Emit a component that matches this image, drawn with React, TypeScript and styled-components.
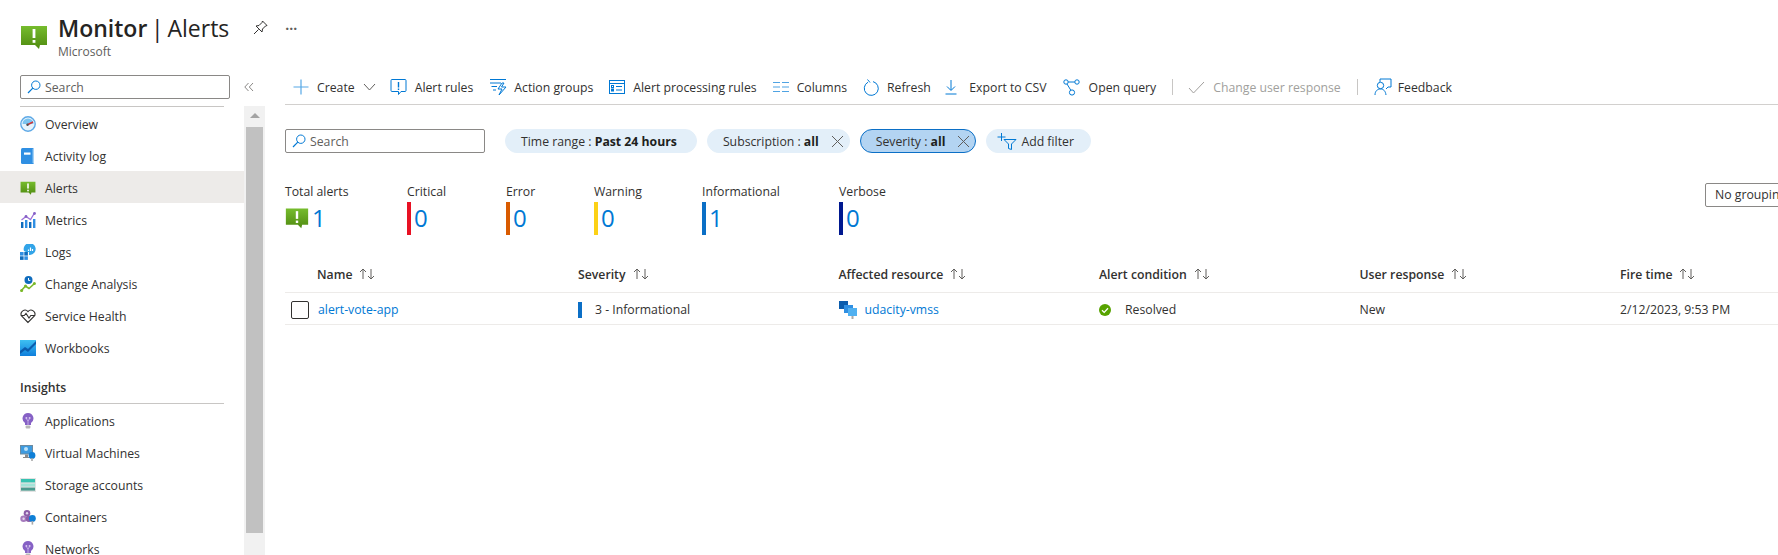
import type {ReactElement} from "react";
import styled, {createGlobalStyle} from "styled-components";

const GlobalStyle = createGlobalStyle`
  html, body {
    margin: 0;
    height: 555px;
    overflow: hidden;
    background: #fff;
  }
  body {
    font-family: "Open Sans", "Liberation Sans", sans-serif;
    font-size: 12.25px;
    color: #323130;
  }
`;

const AlertIcon = ({size}: {size: number}) => (
    <svg width={size} height={size} viewBox="0 0 28 28">
        <defs>
            <linearGradient id="alertGreen" x1="0" y1="0" x2="0" y2="1">
                <stop offset="0" stopColor="#76bc2d" />
                <stop offset="1" stopColor="#4f8a10" />
            </linearGradient>
        </defs>
        <path d="M1 3h26v19H20l-1 4-4-4H1z" fill="url(#alertGreen)" />
        <rect x="12.6" y="6" width="2.8" height="9" fill="#fff" />
        <rect x="12.6" y="17" width="2.8" height="2.8" fill="#fff" />
    </svg>
);

const SearchGlyph = () => (
    <svg width="14" height="14" viewBox="0 0 14 14" fill="none" stroke="#0078d4">
        <circle cx="8.8" cy="5.2" r="4.2" />
        <path d="M5.8 8.2 1 13" strokeWidth="1.2" />
    </svg>
);

const CloseGlyph = () => (
    <svg width="13" height="13" viewBox="0 0 13 13" fill="none" stroke="#605e5c">
        <path d="M1 1l11 11M12 1L1 12" />
    </svg>
);

const SortGlyph = () => (
    <svg width="18" height="12" viewBox="0 0 18 12" fill="none" stroke="#605e5c">
        <path d="M5 11V1M2 4l3-3 3 3M13 1v10M10 8l3 3 3-3" />
    </svg>
);

const navIcons: Record<string, ReactElement> = {
    overview: (
        <svg width="16" height="16" viewBox="0 0 16 16">
            <circle cx="8" cy="8" r="7.2" fill="#e6f3fc" stroke="#5ea9e6" strokeWidth="1.4" />
            <path d="M2.5 8a5.5 5.5 0 0 1 11 0z" fill="#7cc4f0" />
            <path d="M7 9l6-3" stroke="#d13438" strokeWidth="1.4" />
            <circle cx="7.5" cy="8.8" r="1.2" fill="#505050" />
        </svg>
    ),
    log: (
        <svg width="16" height="16" viewBox="0 0 16 16">
            <rect x="1" y="0" width="13" height="16" rx="1.5" fill="#2f8fe3" />
            <rect x="12.6" y="1" width="1.4" height="14" fill="#a6d2f5" />
            <rect x="4" y="4.5" width="6.5" height="2.2" fill="#fff" />
        </svg>
    ),
    metrics: (
        <svg width="16" height="16" viewBox="0 0 16 16">
            <rect x="1" y="10" width="2.4" height="6" fill="#0f6cbd" />
            <rect x="5" y="8" width="2.4" height="8" fill="#2f8fe3" />
            <rect x="9" y="10" width="2.4" height="6" fill="#0f6cbd" />
            <rect x="13" y="7" width="2.4" height="9" fill="#2f8fe3" />
            <path d="M1.5 8L6 4.5l4.5 3 4-6.5" fill="none" stroke="#9b6fd8" strokeWidth="1.3" />
            <circle cx="6" cy="4.5" r="1.4" fill="#8661c5" />
            <circle cx="14.5" cy="1.5" r="1.4" fill="#8661c5" />
        </svg>
    ),
    logs: (
        <svg width="16" height="16" viewBox="0 0 16 16">
            <rect x="0" y="8" width="3.6" height="3.6" fill="#2f8fe3" />
            <rect x="4.3" y="8" width="3.6" height="3.6" fill="#0f6cbd" />
            <rect x="0" y="12.3" width="3.6" height="3.6" fill="#0f6cbd" />
            <rect x="4.3" y="12.3" width="3.6" height="3.6" fill="#2f8fe3" />
            <path d="M4 7a6 6 0 1 1 6 4H9V8H6z" fill="#32a4e8" />
            <path d="M8.5 7V5.5M10.5 7V3.5M12.5 7V5" stroke="#fff" strokeWidth="1.2" />
        </svg>
    ),
    change: (
        <svg width="16" height="16" viewBox="0 0 16 16">
            <path d="M1 15l4.5-5 3.5 2.5 5.5-5" fill="none" stroke="#7ab929" strokeWidth="1.6" />
            <circle cx="1.6" cy="14.6" r="1.5" fill="#7ab929" />
            <circle cx="5.5" cy="10" r="1.5" fill="#7ab929" />
            <circle cx="14.4" cy="7.4" r="1.5" fill="#7ab929" />
            <circle cx="8.5" cy="4" r="4" fill="#0f6cbd" />
            <path d="M8.5 2v2.4h1.8" fill="none" stroke="#fff" />
        </svg>
    ),
    health: (
        <svg width="16" height="16" viewBox="0 0 16 16" fill="none" stroke="#323130" strokeWidth="1.1">
            <path d="M8 14.5L1.6 8A3.9 3.9 0 0 1 8 3.6 3.9 3.9 0 0 1 14.4 8z" />
            <path d="M.8 7.5h3.5L6 5.5l3 4.5 1.8-2.5h4.4" fill="#fff" />
        </svg>
    ),
    workbooks: (
        <svg width="16" height="16" viewBox="0 0 16 16">
            <defs>
                <linearGradient id="workbook" x1="0" y1="0" x2="0" y2="1">
                    <stop offset="0" stopColor="#3ec0f2" />
                    <stop offset="1" stopColor="#0f7fdc" />
                </linearGradient>
            </defs>
            <rect width="16" height="16" fill="url(#workbook)" />
            <path d="M0 11l5-4 3 2 8-8v3L8 12 5 10l-5 4z" fill="#0b5cad" />
        </svg>
    ),
    bulb: (
        <svg width="16" height="16" viewBox="0 0 16 16">
            <path d="M8 0a5.4 5.4 0 0 1 3 9.9V12H5V9.9A5.4 5.4 0 0 1 8 0z" fill="#8661c5" />
            <rect x="5.6" y="12.6" width="4.8" height="3" rx="1" fill="#b8b8b8" />
            <circle cx="6.4" cy="5" r="1" fill="#d9c8f0" />
            <circle cx="9.6" cy="5" r="1" fill="#d9c8f0" />
            <path d="M6.6 6l1.4 2 1.4-2M8 8v4" stroke="#d9c8f0" strokeWidth=".7" fill="none" />
        </svg>
    ),
    vm: (
        <svg width="16" height="16" viewBox="0 0 16 16">
            <rect x="0" y="0" width="13" height="9.5" fill="#6d8ba0" />
            <rect x="1" y="1" width="11" height="7.5" fill="#3e9be0" />
            <circle cx="6" cy="4" r="2" fill="#bfe3f8" />
            <path d="M5 9.5h3V12h2v1H3v-1h2z" fill="#8a8a8a" />
            <circle cx="12" cy="10.5" r="3.4" fill="#0f7fd6" />
            <rect x="11.2" y="13" width="1.6" height="3" fill="#a8a8a8" />
        </svg>
    ),
    storage: (
        <svg width="16" height="16" viewBox="0 0 16 16">
            <rect x="0" y="1" width="16" height="14" fill="#e3e3e3" />
            <rect x="1" y="2" width="14" height="3.4" fill="#37c2b1" />
            <rect x="1" y="6.6" width="14" height="3" fill="#a3e3d8" />
            <rect x="1" y="10.6" width="14" height="3" fill="#4a9a8e" />
        </svg>
    ),
    containers: (
        <svg width="16" height="16" viewBox="0 0 16 16">
            <circle cx="7" cy="4.2" r="3.3" fill="#8c5da8" />
            <circle cx="3.6" cy="9.8" r="3.3" fill="#a67bbd" />
            <circle cx="9" cy="9.8" r="3.3" fill="#8c5da8" />
            <circle cx="7" cy="4.2" r="1.2" fill="#e3d3ec" />
            <circle cx="3.6" cy="9.8" r="1.2" fill="#e3d3ec" />
            <circle cx="12.4" cy="9.4" r="3.4" fill="#0f7fd6" />
            <rect x="11.6" y="12" width="1.6" height="3.6" fill="#a8a8a8" />
        </svg>
    ),
};

const navGroups = [
    {
        items: [
            {label: "Overview", icon: navIcons.overview},
            {label: "Activity log", icon: navIcons.log},
            {label: "Alerts", icon: <AlertIcon size={16} />, active: true},
            {label: "Metrics", icon: navIcons.metrics},
            {label: "Logs", icon: navIcons.logs},
            {label: "Change Analysis", icon: navIcons.change},
            {label: "Service Health", icon: navIcons.health},
            {label: "Workbooks", icon: navIcons.workbooks},
        ],
    },
    {
        title: "Insights",
        items: [
            {label: "Applications", icon: navIcons.bulb},
            {label: "Virtual Machines", icon: navIcons.vm},
            {label: "Storage accounts", icon: navIcons.storage},
            {label: "Containers", icon: navIcons.containers},
            {label: "Networks", icon: navIcons.bulb},
        ],
    },
];

const toolIcons = {
    plus: (
        <svg width="16" height="16" viewBox="0 0 16 16" stroke="#56a8e6" strokeWidth="1.2">
            <path d="M8 .5v15M.5 8h15" />
        </svg>
    ),
    alertRules: (
        <svg width="17" height="18" viewBox="0 0 17 18" fill="none" stroke="#0078d4">
            <path d="M2 1.5h13a1 1 0 0 1 1 1v10a1 1 0 0 1-1 1h-4l-2.5 3v-3H2a1 1 0 0 1-1-1v-10a1 1 0 0 1 1-1z" />
            <path d="M8.5 4v5.5M8.5 10.5v1.6" strokeWidth="1.4" />
        </svg>
    ),
    actionGroups: (
        <svg width="18" height="18" viewBox="0 0 18 18" fill="none" stroke="#0078d4">
            <path d="M1 1.5h16M1 5h11M2.5 8.5H8M4 12h3" />
            <path d="M13 5l-4 6h4l-3 6 7-8h-4.5L15 5z" />
        </svg>
    ),
    processing: (
        <svg width="16" height="16" viewBox="0 0 16 16" fill="none" stroke="#0078d4">
            <rect x=".5" y="1.5" width="15" height="13" />
            <path d="M.5 4.5h15M7 7.5h6M7 11h6" />
            <rect x="2.5" y="6.5" width="2" height="2" />
            <rect x="2.5" y="10" width="2" height="2" />
        </svg>
    ),
    columns: (
        <svg width="16" height="12" viewBox="0 0 16 12" stroke="#4fa3e3" strokeWidth="1.2">
            <path d="M0 1.5h7M9 1.5h7M0 6h7M9 6h7M0 10.5h7M9 10.5h7" />
        </svg>
    ),
    refresh: (
        <svg width="16" height="17" viewBox="0 0 16 17" fill="none" stroke="#0078d4">
            <path d="M5 3.2A7 7 0 1 0 10 2.6" />
            <path d="M4.5.5 7 3.5" />
        </svg>
    ),
    exportCsv: (
        <svg width="12" height="16" viewBox="0 0 12 16" fill="none" stroke="#0078d4">
            <path d="M6 1v10M2 7.5 6 11.5 10 7.5M.5 15h11" />
        </svg>
    ),
    query: (
        <svg width="17" height="17" viewBox="0 0 17 17" fill="none" stroke="#0078d4">
            <circle cx="3" cy="3" r="2.2" />
            <circle cx="14" cy="3" r="2.2" />
            <circle cx="9" cy="13.5" r="2.6" />
            <path d="M5.2 3h6.6M4 5l3.8 6.2" />
        </svg>
    ),
    check: (
        <svg width="17" height="13" viewBox="0 0 17 13" fill="none" stroke="#a19f9d">
            <path d="M1 7l4.5 5L16 1" />
        </svg>
    ),
    feedback: (
        <svg width="18" height="18" viewBox="0 0 18 18" fill="none" stroke="#0078d4">
            <path d="M6 4V1h11v8h-3l-2 2" />
            <circle cx="6.5" cy="7.5" r="3.2" />
            <path d="M1 17c0-4 2.5-6 5.5-6s5 2 5.5 6" />
        </svg>
    ),
};

const summary = [
    {label: "Critical", value: 0, color: "#e81123", width: 99},
    {label: "Error", value: 0, color: "#d95b00", width: 88},
    {label: "Warning", value: 0, color: "#fcd116", width: 108},
    {label: "Informational", value: 1, color: "#0b6fc6", width: 137},
    {label: "Verbose", value: 0, color: "#00188f", width: 100},
];

const columns = ["Name", "Severity", "Affected resource", "Alert condition", "User response", "Fire time"];

export default function App() {
    return (
        <Page>
            <GlobalStyle />
            <Header>
                <AlertIcon size={28} />
                <TitleBlock>
                    <Title>
                        <strong>Monitor</strong> | Alerts
                    </Title>
                    <Subtitle>Microsoft</Subtitle>
                </TitleBlock>
                <PinButton>
                    <svg width="15" height="15" viewBox="0 0 15 15" fill="none" stroke="#323130">
                        <path d="M9.5 1L14 5.5l-1.5.5-3 3-.5 3L3 6l3-.5 3-3zM5.5 9.5L1 14" />
                    </svg>
                </PinButton>
                <MoreDots>···</MoreDots>
            </Header>
            <Body>
                <Sidebar>
                    <SideTop>
                        <SearchBox $width={210}>
                            <SearchGlyph />
                            Search
                        </SearchBox>
                        <Collapse>
                            <svg width="10" height="10" viewBox="0 0 10 10" fill="none" stroke="#8a8886">
                                <path d="M4.5 1L.8 5l3.7 4M9 1L5.3 5 9 9" />
                            </svg>
                        </Collapse>
                    </SideTop>
                    <SideBottom>
                        <NavColumn>
                            <NavDivider />
                            {navGroups.map((group, i) => (
                                <NavGroup key={i}>
                                    {group.title && <NavTitle>{group.title}</NavTitle>}
                                    {group.items.map((item) => (
                                        <NavItem key={item.label} $active={item.active}>
                                            <NavIconSlot>{item.icon}</NavIconSlot>
                                            {item.label}
                                        </NavItem>
                                    ))}
                                </NavGroup>
                            ))}
                        </NavColumn>
                        <ScrollTrack>
                            <ScrollArrow />
                            <ScrollThumb />
                        </ScrollTrack>
                    </SideBottom>
                </Sidebar>
                <Main>
                    <Toolbar>
                        <ToolButton>
                            {toolIcons.plus}
                            Create
                            <svg width="13" height="8" viewBox="0 0 13 8" fill="none" stroke="#605e5c">
                                <path d="M1 1l5.5 6L12 1" />
                            </svg>
                        </ToolButton>
                        <ToolButton $shift={-2}>{toolIcons.alertRules}Alert rules</ToolButton>
                        <ToolButton $iconGap={7}>{toolIcons.actionGroups}Action groups</ToolButton>
                        <ToolButton>{toolIcons.processing}Alert processing rules</ToolButton>
                        <ToolButton>{toolIcons.columns}Columns</ToolButton>
                        <ToolButton>{toolIcons.refresh}Refresh</ToolButton>
                        <ToolButton $iconGap={12.5} $shift={-2}>
                            {toolIcons.exportCsv}Export to CSV
                        </ToolButton>
                        <ToolButton $iconGap={9}>{toolIcons.query}Open query</ToolButton>
                        <ToolDivider />
                        <ToolButton $disabled $shift={-1}>
                            {toolIcons.check}Change user response
                        </ToolButton>
                        <ToolDivider />
                        <ToolButton $iconGap={6}>{toolIcons.feedback}Feedback</ToolButton>
                    </Toolbar>
                    <FilterRow>
                        <SearchBox $width={200}>
                            <SearchGlyph />
                            Search
                        </SearchBox>
                        <Pill $first>
                            <span>
                                Time range : <b>Past 24 hours</b>
                            </span>
                        </Pill>
                        <Pill $closable>
                            <span>
                                Subscription : <b>all</b>
                            </span>
                            <CloseGlyph />
                        </Pill>
                        <Pill $closable $selected>
                            <span>
                                Severity : <b>all</b>
                            </span>
                            <CloseGlyph />
                        </Pill>
                        <Pill $add>
                            <svg width="20" height="18" viewBox="0 0 20 18" fill="none" stroke="#0078d4">
                                <path d="M4.5 1v8M.5 5h8M7 7.5h12L14.5 12v5.5l-3-1V12z" />
                            </svg>
                            Add filter
                        </Pill>
                    </FilterRow>
                    <SummaryRow>
                        <SummaryCell $width={122}>
                            <SummaryLabel>Total alerts</SummaryLabel>
                            <SummaryValue>
                                <AlertIcon size={24} />
                                <Count>1</Count>
                            </SummaryValue>
                        </SummaryCell>
                        {summary.map((s) => (
                            <SummaryCell key={s.label} $width={s.width}>
                                <SummaryLabel>{s.label}</SummaryLabel>
                                <SummaryValue>
                                    <SeverityBar $color={s.color} />
                                    <Count>{s.value}</Count>
                                </SummaryValue>
                            </SummaryCell>
                        ))}
                        <GroupingSelect>No grouping</GroupingSelect>
                    </SummaryRow>
                    <Table>
                        <HeaderRow>
                            {columns.map((c) => (
                                <HeaderCell key={c}>
                                    {c}
                                    <SortGlyph />
                                </HeaderCell>
                            ))}
                        </HeaderRow>
                        <DataRow>
                            <NameCell>
                                <Checkbox />
                                <Link>alert-vote-app</Link>
                            </NameCell>
                            <DataCell>
                                <CellBar />
                                3 - Informational
                            </DataCell>
                            <DataCell>
                                <svg width="18" height="18" viewBox="0 0 18 18">
                                    <rect x="0" y="0" width="9" height="8" fill="#0b5cad" />
                                    <rect x="5" y="4" width="9" height="8" fill="#2f8fe3" />
                                    <rect x="9" y="7" width="9" height="8" fill="#50b0f0" />
                                    <rect x="12.5" y="15" width="2" height="3" fill="#a8a8a8" />
                                </svg>
                                <Link>udacity-vmss</Link>
                            </DataCell>
                            <DataCell>
                                <svg width="12" height="12" viewBox="0 0 12 12">
                                    <circle cx="6" cy="6" r="6" fill="#57a300" />
                                    <path d="M3 6.2l2.2 2.2L9 4.2" fill="none" stroke="#fff" strokeWidth="1.3" />
                                </svg>
                                <ResolvedText>Resolved</ResolvedText>
                            </DataCell>
                            <DataCell>New</DataCell>
                            <DataCell>2/12/2023, 9:53 PM</DataCell>
                        </DataRow>
                    </Table>
                </Main>
            </Body>
        </Page>
    );
}

const Page = styled.div`
  width: 1778px;
  height: 555px;
  display: flex;
  flex-direction: column;
  overflow: hidden;
`;

const Header = styled.header`
  height: 70px;
  flex: none;
  display: flex;
  align-items: flex-start;
  padding: 22px 0 0 20px;
  box-sizing: border-box;

  > svg {
    margin-top: 1px;
  }
`;

const TitleBlock = styled.div`
  margin-left: 10px;
  margin-top: -10px;
`;

const Title = styled.h1`
  margin: 0;
  font-size: 23px;
  line-height: 32px;
  font-weight: 400;
  word-spacing: -2.2px;
  color: #252423;

  strong {
    font-weight: 600;
  }
`;

const Subtitle = styled.div`
  font-size: 12px;
  line-height: 14px;
  color: #605e5c;
  margin-top: 1px;
`;

const PinButton = styled.div`
  margin-left: 24px;
  margin-top: -2px;
`;

const MoreDots = styled.div`
  margin-left: 17px;
  margin-top: -3px;
  font-size: 14px;
  font-weight: 700;
  color: #605e5c;
`;

const Body = styled.div`
  flex: 1;
  display: flex;
  min-height: 0;
`;

const Sidebar = styled.aside`
  width: 265px;
  flex: none;
  display: flex;
  flex-direction: column;
  padding-top: 5px;
  box-sizing: border-box;
`;

const SideTop = styled.div`
  display: flex;
  align-items: center;
  padding-left: 20px;
  height: 24px;
`;

const SearchBox = styled.div<{$width: number}>`
  width: ${(p) => p.$width}px;
  height: 24px;
  box-sizing: border-box;
  border: 1px solid #8a8886;
  border-radius: 2px;
  display: flex;
  align-items: center;
  gap: 4px;
  padding-left: 6px;
  color: #605e5c;
  flex: none;
`;

const Collapse = styled.div`
  margin-left: 14px;
  display: flex;
`;

const SideBottom = styled.div`
  flex: 1;
  min-height: 0;
  display: flex;
  margin-top: 7px;
  overflow: hidden;
`;

const NavColumn = styled.nav`
  width: 244px;
  flex: none;
`;

const NavDivider = styled.div`
  margin: 0 20px;
  height: 1px;
  background: #c8c6c4;
`;

const NavGroup = styled.div`
  & + & {
    margin-top: 7px;
  }
`;

const NavTitle = styled.div`
  margin: 0 20px;
  padding: 10px 0 7px;
  height: 16px;
  line-height: 16px;
  border-bottom: 1px solid #c8c6c4;
  font-weight: 600;
  color: #323130;
`;

const NavItem = styled.div<{$active?: boolean}>`
  height: 32px;
  box-sizing: border-box;
  display: flex;
  align-items: center;
  padding: 2px 0 0 20px;
  background: ${(p) => (p.$active ? "#edebe9" : "transparent")};
  color: #323130;
`;

const NavIconSlot = styled.span`
  width: 16px;
  height: 16px;
  display: flex;
  margin-right: 9px;
`;

const ScrollTrack = styled.div`
  width: 21px;
  flex: none;
  background: #f1f1f1;
  display: flex;
  flex-direction: column;
  align-items: center;
`;

const ScrollArrow = styled.div`
  width: 0;
  height: 5px;
  box-sizing: border-box;
  margin: 7px 0 9px;
  border-left: 5px solid transparent;
  border-right: 5px solid transparent;
  border-bottom: 5px solid #a3a3a3;
`;

const ScrollThumb = styled.div`
  width: 17px;
  height: 406px;
  background: #c1c1c1;
`;

const Main = styled.main`
  flex: 1;
  min-width: 0;
  padding-left: 20px;
`;

const Toolbar = styled.div`
  height: 34px;
  display: flex;
  align-items: center;
  gap: 16px;
  padding-left: 8px;
  border-bottom: 1px solid #d2d0ce;
  box-sizing: content-box;
`;

const ToolButton = styled.div<{$disabled?: boolean; $iconGap?: number; $shift?: number}>`
  display: flex;
  align-items: center;
  gap: ${(p) => p.$iconGap ?? 8}px;
  margin-left: ${(p) => p.$shift ?? 0}px;
  color: ${(p) => (p.$disabled ? "#a19f9d" : "#323130")};
  white-space: nowrap;
`;

const ToolDivider = styled.div`
  width: 1px;
  height: 16px;
  background: #c8c6c4;
`;

const FilterRow = styled.div`
  display: flex;
  align-items: center;
  gap: 10px;
  margin-top: 24px;
`;

const Pill = styled.div<{$selected?: boolean; $first?: boolean; $closable?: boolean; $add?: boolean}>`
  height: 24px;
  box-sizing: border-box;
  border-radius: 12px;
  padding: 0 ${(p) => (p.$closable ? "5px" : p.$first ? "19px" : "16px")} 0 ${(p) => (p.$add ? "10px" : "15px")};
  display: flex;
  align-items: center;
  gap: ${(p) => (p.$add ? "4px" : "12px")};
  white-space: nowrap;
  margin-left: ${(p) => (p.$first ? "10px" : "0")};
  background: ${(p) => (p.$selected ? "#b3d4f2" : "#e3eff9")};
  border: 1px solid ${(p) => (p.$selected ? "#0b6fc6" : "#e3eff9")};
  color: #323130;

  b {
    font-weight: 700;
    color: #201f1e;
  }
`;

const SummaryRow = styled.div`
  display: flex;
  margin-top: 31px;
  height: 54px;
  position: relative;
`;

const SummaryCell = styled.div<{$width: number}>`
  width: ${(p) => p.$width}px;
  flex: none;
`;

const SummaryLabel = styled.div`
  line-height: 16px;
  color: #323130;
`;

const SummaryValue = styled.div`
  display: flex;
  align-items: center;
  height: 34px;
  margin-top: 1px;
`;

const SeverityBar = styled.div<{$color: string}>`
  width: 4px;
  height: 33px;
  background: ${(p) => p.$color};
`;

const Count = styled.span`
  font-size: 24px;
  line-height: 30px;
  color: #0078d4;
  margin-left: 3px;
`;

const GroupingSelect = styled.div`
  position: absolute;
  left: 1420px;
  top: -1px;
  width: 120px;
  height: 24px;
  box-sizing: border-box;
  border: 1px solid #8a8886;
  border-radius: 2px;
  padding-left: 9px;
  line-height: 22px;
  color: #323130;
  background: #fff;
`;

const Table = styled.div`
  margin-top: 18px;
`;

const HeaderRow = styled.div`
  display: grid;
  grid-template-columns: 293px repeat(5, 260.5px);
  height: 36px;
  align-items: center;
  border-bottom: 1px solid #edebe9;
`;

const HeaderCell = styled.div`
  display: flex;
  align-items: center;
  gap: 6px;
  font-weight: 600;
  color: #323130;

  &:first-child {
    padding-left: 32px;
  }
`;

const DataRow = styled.div`
  display: grid;
  grid-template-columns: 293px repeat(5, 260.5px);
  height: 31px;
  box-sizing: content-box;
  align-items: center;
  border-bottom: 1px solid #edebe9;
`;

const DataCell = styled.div`
  display: flex;
  align-items: center;
  gap: 8px;
  margin-top: 2px;
  color: #323130;
`;

const NameCell = styled(DataCell)`
  padding-left: 6px;
  gap: 9px;
`;

const Checkbox = styled.div`
  width: 18px;
  height: 18px;
  box-sizing: border-box;
  border: 1px solid #323130;
  border-radius: 2px;
`;

const Link = styled.span`
  color: #0078d4;
`;

const CellBar = styled.div`
  width: 4px;
  height: 16px;
  background: #0b6fc6;
  margin-right: 5px;
`;

const ResolvedText = styled.span`
  margin-left: 6px;
`;
